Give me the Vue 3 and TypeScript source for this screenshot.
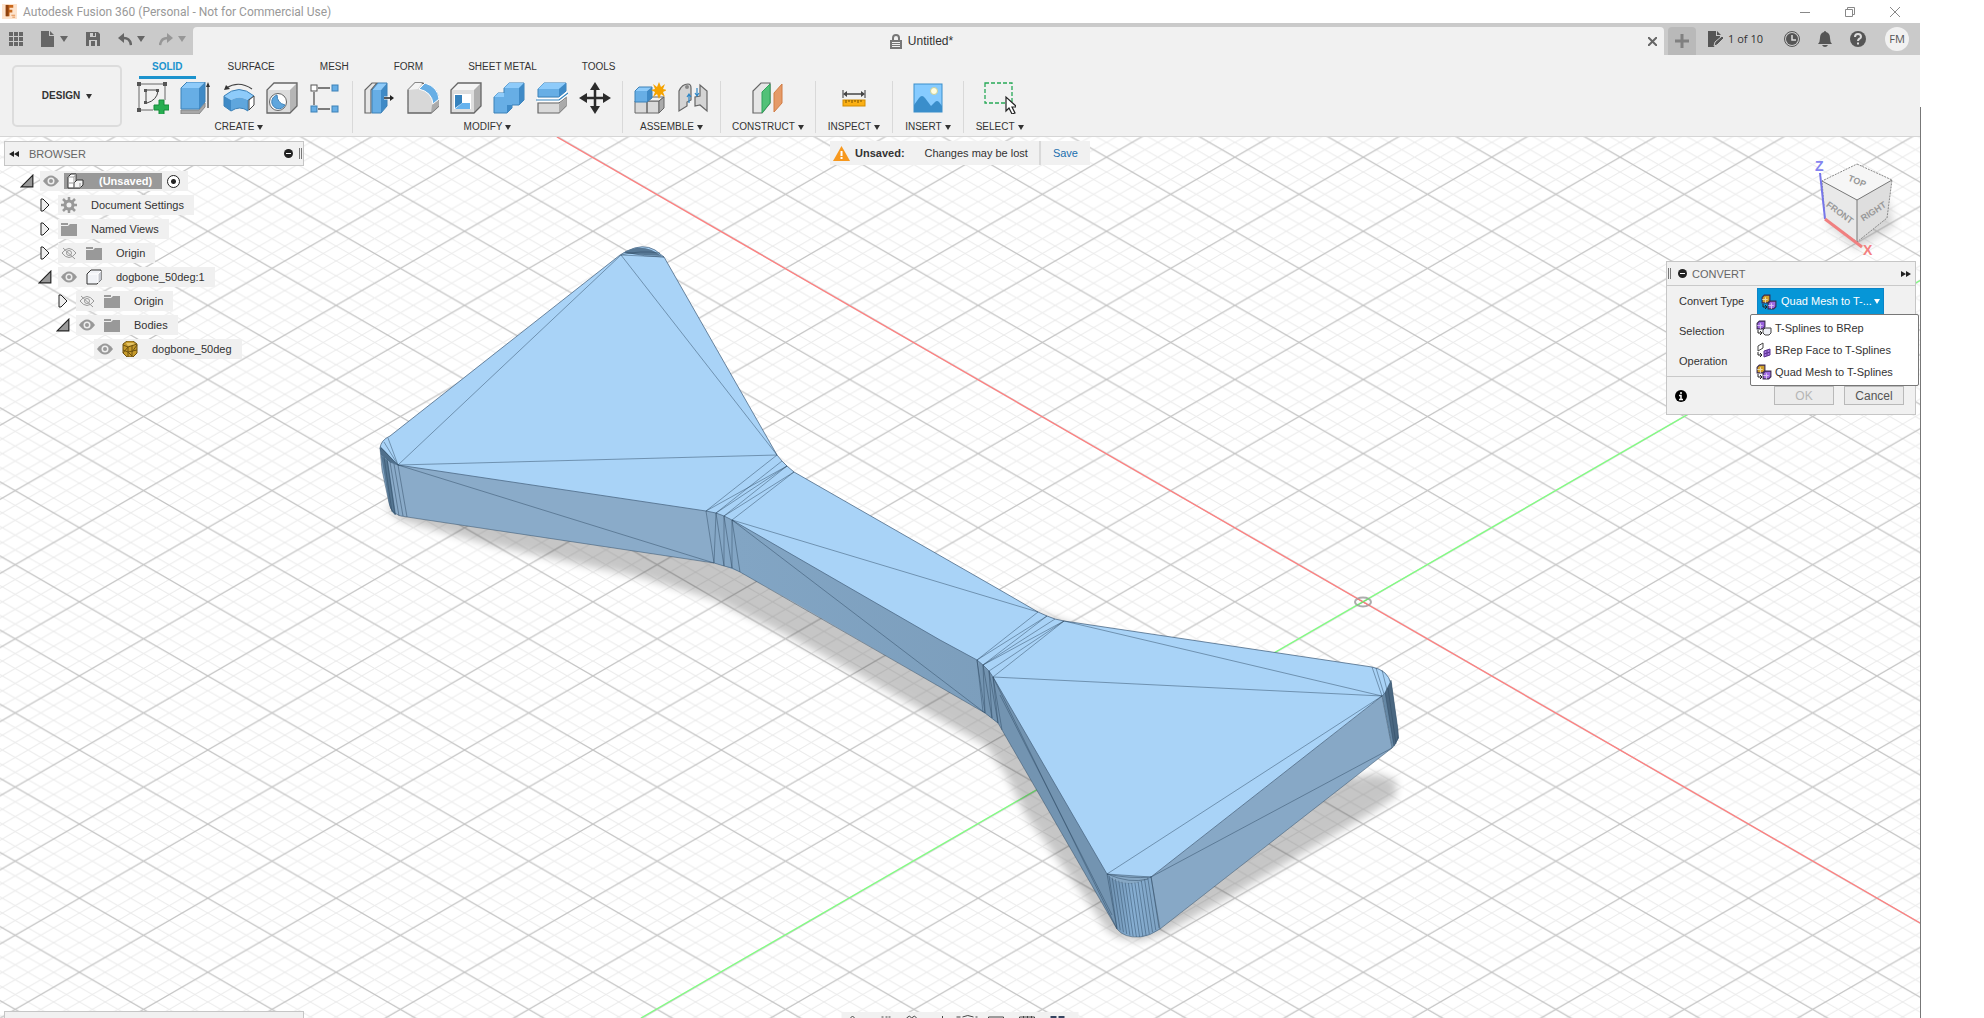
<script setup lang="ts">
import { ref } from 'vue'

interface ToolGroup {
  label: string
  icons: string[]
}

interface TreeRow {
  label: string
  level: number
  arrow: 'open' | 'closed' | 'none'
  icons: string[]
}

const tabs: string[] = ['SOLID', 'SURFACE', 'MESH', 'FORM', 'SHEET METAL', 'TOOLS']
const activeTab = ref('SOLID')

const groups: ToolGroup[] = [
  { label: 'CREATE', icons: ['sketch', 'extrude', 'revolve', 'hole', 'pattern'] },
  { label: 'MODIFY', icons: ['presspull', 'fillet', 'shell', 'combine', 'split', 'move'] },
  { label: 'ASSEMBLE', icons: ['component', 'joint'] },
  { label: 'CONSTRUCT', icons: ['plane'] },
  { label: 'INSPECT', icons: ['measure'] },
  { label: 'INSERT', icons: ['picture'] },
  { label: 'SELECT', icons: ['marquee'] },
]

const tree: TreeRow[] = [
  { label: 'Document Settings', level: 1, arrow: 'closed', icons: ['gear'] },
  { label: 'Named Views', level: 1, arrow: 'closed', icons: ['folder'] },
  { label: 'Origin', level: 1, arrow: 'closed', icons: ['eye-off', 'folder'] },
  { label: 'dogbone_50deg:1', level: 1, arrow: 'open', icons: ['eye', 'cube'] },
  { label: 'Origin', level: 2, arrow: 'closed', icons: ['eye-off', 'folder'] },
  { label: 'Bodies', level: 2, arrow: 'open', icons: ['eye', 'folder'] },
  { label: 'dogbone_50deg', level: 3, arrow: 'none', icons: ['eye', 'mesh'] },
]

const convertType = ref('quad')
const convertOptions = [
  { value: 'tspline', label: 'T-Splines to BRep', icon: 'conv-t' },
  { value: 'brep', label: 'BRep Face to T-Splines', icon: 'conv-b' },
  { value: 'quad', label: 'Quad Mesh to T-Splines', icon: 'conv-q' },
]

const minor = [1, 2, 3, 4]

/* Vertical facets of the rounded corner nearest to the viewer */
const frontFacets = Array.from({ length: 14 }, (_, i) => {
  const t = i / 13
  const arc = Math.sin(Math.PI * t)
  return {
    x1: 1109 + 42 * t,
    y1: 876 + 7 * arc,
    x2: 1117 + 42 * t,
    y2: 928 + 9 * arc,
  }
})
</script>

<template>
  <div class="page">
    <svg class="defs" width="0" height="0" aria-hidden="true">
      <symbol id="i-sketch" viewBox="0 0 32 32">
        <path d="M2 2h26v16M2 2v26h14" fill="none" stroke="#666" stroke-width="1" />
        <path d="M9 8h10M9 8v12M21 9q-1 9-11 12" fill="none" stroke="#444" />
        <path d="M0 0h4v4H0zM26 0h4v4h-4zM0 26h4v4H0zM7 7h3v3H7zM19 7h3v3h-3zM7 19h3v3H7z" fill="#555" />
        <path d="M22 18h5v5h5v5h-5v5h-5v-5h-5v-5h5z" fill="#27ae51" stroke="#168a3a" stroke-width="1" />
      </symbol>
      <symbol id="i-extrude" viewBox="0 0 32 32">
        <path d="M1 28h18l6-7v4l-6 7H1z" fill="#a8a8a8" stroke="#888" />
        <path d="M1 6h18v21H1z" fill="#67aee5" />
        <path d="M1 6l6-6h18l-6 6z" fill="#8ecbfa" />
        <path d="M19 6l6-6v20l-6 7z" fill="#3f8ac6" />
        <path d="M1 27V6l6-6h18v20l-6 7z" fill="none" stroke="#3d81b7" />
        <path d="M28 26V4" stroke="#333" stroke-width="1.2" />
        <path d="M26 5l2-5 2 5z" fill="#333" />
      </symbol>
      <symbol id="i-revolve" viewBox="0 0 32 32">
        <path d="M1 14Q16 1 31 14l-6 4q-9-5-17 0z" fill="#8ecbfa" />
        <path d="M1 14l7 4v11l-7-5z" fill="#3f8ac6" />
        <path d="M8 18q8-5 17 0v11q-8-6-17 0z" fill="#5fa6dd" />
        <path d="M1 14Q16 1 31 14l-6 4v11q-8-6-17 0l-7-5z" fill="none" stroke="#3d81b7" />
        <path d="M26 18l5-4v9l-5 5z" fill="#fff" stroke="#444" />
        <path d="M3 6Q16-2 29 7" fill="none" stroke="#444" stroke-width="1.2" />
        <path d="M1 8l2-5 4 4z" fill="#333" />
      </symbol>
      <symbol id="i-hole" viewBox="0 0 32 32">
        <path d="M1 8l7-7h23l-7 7z" fill="#f4f4f4" />
        <path d="M24 8l7-7v23l-7 7z" fill="#b5b5b5" />
        <path d="M1 8h23v23H1z" fill="#dcdcdc" />
        <path d="M1 31V8l7-7h23v23l-7 7z" fill="none" stroke="#666" stroke-width="1.3" />
        <circle cx="12" cy="20" r="8.500" fill="#fff" stroke="#666" />
        <path d="M11 13a7 7 0 1 0 8 10q-8-2-8-10z" fill="#5fa6dd" stroke="#3d81b7" />
      </symbol>
      <symbol id="i-pattern" viewBox="0 0 32 32">
        <path d="M9 6h12M5 10v13M9 27h12" stroke="#555" stroke-width="1.300" />
        <rect x="2" y="3" width="6" height="6" fill="#fff" stroke="#555" />
        <rect x="23" y="3" width="6" height="6" fill="#67aee5" stroke="#3d81b7" />
        <rect x="2" y="24" width="6" height="6" fill="#67aee5" stroke="#3d81b7" />
        <rect x="23" y="24" width="6" height="6" fill="#67aee5" stroke="#3d81b7" />
      </symbol>
      <symbol id="i-presspull" viewBox="0 0 32 32">
        <path d="M1 31V8l7-7h5l-6 7v23z" fill="#e6e6e6" stroke="#666" stroke-width="1.2" />
        <path d="M8 8l6-7h9l-6 7z" fill="#8ecbfa" />
        <path d="M8 8h9v23H8z" fill="#67aee5" />
        <path d="M17 8l6-7v23l-6 7z" fill="#3f8ac6" />
        <path d="M8 31V8l6-7h9v23l-6 7z" fill="none" stroke="#3d81b7" />
        <path d="M20 16h7" stroke="#fff" stroke-width="3" />
        <path d="M20 16h7" stroke="#222" stroke-width="1.5" />
        <path d="M26 13l4 3-4 3z" fill="#222" />
      </symbol>
      <symbol id="i-fillet" viewBox="0 0 32 32">
        <path d="M1 31V8l7-7h7q16 4 17 17v6l-8 7z" fill="#d8d8d8" stroke="#666" stroke-width="1.300" />
        <path d="M1 8l7-7h7l-4 6z" fill="#f4f4f4" />
        <path d="M12 7l6-6q13 4 14 16l-6 5Q25 10 12 7z" fill="#67aee5" stroke="#fff" stroke-width="1" />
        <path d="M25 23l7-5v6l-8 7z" fill="#aaa" />
      </symbol>
      <symbol id="i-shell" viewBox="0 0 32 32">
        <path d="M1 8l7-7h23l-7 7z" fill="#f4f4f4" />
        <path d="M24 8l7-7v23l-7 7z" fill="#b0b0b0" />
        <path d="M1 8h23v23H1z" fill="#dedede" />
        <path d="M1 31V8l7-7h23v23l-7 7z" fill="none" stroke="#666" stroke-width="1.300" />
        <path d="M4 12h17v15H4z" fill="#fff" />
        <path d="M5 13h7v8l-7 5z" fill="#3682bd" />
        <path d="M5 27l7-6h8v6z" fill="#67b3ee" />
      </symbol>
      <symbol id="i-combine" viewBox="0 0 32 32">
        <path d="M1 31V15l4-4h6V6l5-5h15v17l-5 5h-7v3l-5 5z" fill="#67aee5" stroke="#3d81b7" />
        <path d="M11 6l5-5h15l-5 5zM1 15l4-4h6v4z" fill="#8ecbfa" />
        <path d="M26 6l5-5v17l-5 5zM14 23h5v3l-5 5z" fill="#3f8ac6" />
      </symbol>
      <symbol id="i-split" viewBox="0 0 32 32">
        <path d="M2 21h21l7-6v9l-7 7H2z" fill="#dadada" stroke="#666" stroke-width="1.2" />
        <path d="M23 22l7-6v8l-7 7z" fill="#aaa" />
        <path d="M2 15V7l6-6h22v8l-7 6z" fill="#67aee5" stroke="#3d81b7" />
        <path d="M2 7l6-6h22l-7 6z" fill="#8ecbfa" />
        <path d="M23 7l7-6v8l-7 6z" fill="#3f8ac6" />
        <path d="M1 18h22l9-7" fill="none" stroke="#fff" stroke-width="4" />
        <path d="M0 18h23l9-7" fill="none" stroke="#3483bd" stroke-width="1.200" />
      </symbol>
      <symbol id="i-move" viewBox="0 0 32 32">
        <path d="M16 5v22M5 16h22" stroke="#2b2b2b" stroke-width="2.500" />
        <path d="M16 0l5 8H11zM16 32l5-8H11zM0 16l8-5v10zM32 16l-8-5v10z" fill="#2b2b2b" />
      </symbol>
      <symbol id="i-component" viewBox="0 0 32 32">
        <path d="M1 19h12v12H1zM13 19h12v12H13z" fill="#d9d9d9" stroke="#666" />
        <path d="M13 19l5-4h12l-5 4z" fill="#f2f2f2" stroke="#666" />
        <path d="M25 19l5-4v11l-5 5z" fill="#aaa" stroke="#666" />
        <path d="M1 9l4-4h13l-5 4z" fill="#8ecbfa" />
        <path d="M1 9h12v11H1z" fill="#67aee5" />
        <path d="M13 9l5-4v11l-5 4z" fill="#3f8ac6" />
        <path d="M1 20V9l4-4h13v11l-5 4z" fill="none" stroke="#3d81b7" />
        <path d="M25 0l2 5 4-3-2 5 4 1-4 2 2 5-4-3-2 5-2-5-4 3 2-5-4-2 4-1-2-5 4 3z" fill="#f5a300" />
      </symbol>
      <symbol id="i-joint" viewBox="0 0 32 32">
        <path d="M2 29V9Q5 2 11 2q3 0 3 4v12l-4 2v4z" fill="#d4d4d4" stroke="#666" stroke-width="1.200" />
        <path d="M30 29V9l-7-6v11l-5 1v9l5-1z" fill="#d4d4d4" stroke="#666" stroke-width="1.200" />
        <circle cx="10" cy="5" r="2" fill="#888" />
        <path d="M12 21v-8M20 6v8M18 11l2 3 2-3M10 15l2-3 2 3" fill="none" stroke="#2d86c6" stroke-width="1.200" />
      </symbol>
      <symbol id="i-plane" viewBox="0 0 32 32">
        <path d="M1 31V9l8-8h9v20l-8 10z" fill="#e6e6e6" stroke="#666" stroke-width="1.200" />
        <path d="M10 10l8-8v19l-8 10z" fill="#52c178" stroke="#2fa45a" />
        <path d="M22 11l8-9v19l-8 9z" fill="#e59a67" stroke="#d27d44" />
      </symbol>
      <symbol id="i-measure" viewBox="0 0 32 32">
        <path d="M5 8v8M27 8v8" stroke="#555" stroke-width="1.200" />
        <path d="M7 12h18" stroke="#444" stroke-width="1.500" />
        <path d="M5 12l4-3v6zM27 12l-4-3v6z" fill="#444" />
        <rect x="5" y="18" width="22" height="6" fill="#fbb014" stroke="#d48d00" />
        <path d="M8 18v3M11 18v2M14 18v3M17 18v2M20 18v3M23 18v2" stroke="#7a5200" />
      </symbol>
      <symbol id="i-picture" viewBox="0 0 32 32">
        <rect x="2" y="2" width="28" height="28" fill="#86cbff" stroke="#3b8fcc" />
        <path d="M2 23l5-7q3-4 6 0l6 8 4-4q2-2 4 0l3 4v6H2z" fill="#3a8ecb" />
        <circle cx="22" cy="9" r="3.500" fill="#fffde0" stroke="#c8cf9a" />
      </symbol>
      <symbol id="i-marquee" viewBox="0 0 32 32">
        <rect x="1" y="1" width="27" height="20" fill="none" stroke="#27a957" stroke-width="1.300" stroke-dasharray="4 2" />
        <path d="M22 15v14l3-3 3 6 3-1-3-6h5z" fill="#fff" stroke="#222" stroke-width="1.200" />
      </symbol>

      <symbol id="i-eye" viewBox="0 0 16 16">
        <path d="M0 8q8-11 16 0-8 11-16 0z" fill="#999" />
        <circle cx="8" cy="8" r="3.500" fill="#eee" />
        <circle cx="8" cy="8" r="2" fill="#999" />
      </symbol>
      <symbol id="i-eye-off" viewBox="0 0 16 16">
        <path d="M1 8q7-9 14 0-7 9-14 0z" fill="none" stroke="#999" />
        <circle cx="8" cy="8" r="2.500" fill="none" stroke="#999" />
        <path d="M2 3l12 11" stroke="#999" />
      </symbol>
      <symbol id="i-folder" viewBox="0 0 16 16">
        <path d="M0 5h7l2-2h7v12H0z" fill="#999" />
        <path d="M0 3h7" stroke="#999" stroke-width="2" />
      </symbol>
      <symbol id="i-gear" viewBox="0 0 16 16">
        <circle cx="8" cy="8" r="4" fill="none" stroke="#999" stroke-width="3" />
        <path d="M8 0v3M8 13v3M0 8h3M13 8h3M2 2l3 3M11 11l3 3M14 2l-3 3M5 11l-3 3" stroke="#999" stroke-width="2.500" />
      </symbol>
      <symbol id="i-cube" viewBox="0 0 16 16">
        <path d="M1 5l4-4h10v10l-4 4H1z" fill="#f0f2f6" stroke="#333" />
        <path d="M12 5l3-3v9l-3 3z" fill="#c4c7ce" />
        <path d="M2 5h10v9M12 5l3-3" stroke="#fff" fill="none" />
      </symbol>
      <symbol id="i-mesh" viewBox="0 0 16 16">
        <path d="M1 3l4-3h6l4 3v9l-4 4H5l-4-4z" fill="#c79b2b" stroke="#6f5310" />
        <path d="M1 4l5 2 9-3M6 6v10M10 5v11M1 9l5 2 9-2M1 12l5-6M10 11l5-7M6 11l4 4" fill="none" stroke="#6f5310" />
        <path d="M4 2h7l2 1-7 2z" fill="#e3c367" />
      </symbol>
      <symbol id="i-assembly" viewBox="0 0 18 16">
        <path d="M1 4l3-3h5v7L7 15H1z" fill="#fff" stroke="#333" />
        <path d="M7 10l3-3h6v5l-3 3H7z" fill="#f4f4f4" stroke="#333" />
        <path d="M1 10h6M7 4v11M13 10v5M1 4h6l2-3" fill="none" stroke="#999" />
      </symbol>

      <symbol id="i-box" viewBox="0 0 9 9">
        <path d="M1 3l2-2h5v5L6 8H1z" fill="currentColor" stroke="#3a2a50" stroke-width="1" />
        <path d="M1 5h5M4 3v5" stroke="#fff" stroke-opacity="0.600" fill="none" />
      </symbol>
      <symbol id="i-conv-t" viewBox="0 0 16 16">
        <use href="#i-box" x="0" y="0" width="10" height="10" color="#9a63dd" />
        <path d="M2 10v3h3M4 11l2 2-2 2" fill="none" stroke="#222" />
        <path d="M7 10l2-2h6v5l-2 2H9l-2-2z" fill="#eef0f7" stroke="#444" />
      </symbol>
      <symbol id="i-conv-b" viewBox="0 0 16 16">
        <path d="M2 4l5-3v5L2 9z" fill="#fff" stroke="#444" />
        <path d="M2 10v3h4M4 11l2 2-2 2" fill="none" stroke="#222" />
        <path d="M8 9l6-2v6l-6 2z" fill="#a273dc" stroke="#5b3191" />
        <path d="M8 12l6-2M11 8v6" stroke="#5b3191" />
      </symbol>
      <symbol id="i-conv-q" viewBox="0 0 16 16">
        <use href="#i-box" x="0" y="0" width="10" height="10" color="#d0a02a" />
        <path d="M2 10v3h3M4 11l2 2-2 2" fill="none" stroke="#222" />
        <use href="#i-box" x="6" y="6" width="10" height="10" color="#a06ae2" />
      </symbol>
    </svg>

    <div class="window">
      <header class="titlebar">
        <svg class="logo" viewBox="0 0 16 16" aria-hidden="true">
          <rect width="16" height="16" fill="#fde3cc" />
          <path d="M4 1h8v3H8v2h3v3H8v4H4z" fill="#c9681c" />
          <path d="M4 1h3v12H4z" fill="#8f4310" />
          <path d="M10 12h4M11 14h3" stroke="#e08a45" />
        </svg>
        <span class="app-name">Autodesk Fusion 360 (Personal - Not for Commercial Use)</span>
        <div class="win-buttons">
          <button aria-label="Minimize"><svg viewBox="0 0 10 10"><path d="M0 5.500h10" /></svg></button>
          <button aria-label="Restore"><svg viewBox="0 0 10 10"><path d="M.5 2.500h7v7h-7zM2.500 2.500v-2h7v7h-2" /></svg></button>
          <button aria-label="Close"><svg viewBox="0 0 10 10"><path d="M0 0l10 10M10 0L0 10" /></svg></button>
        </div>
      </header>

      <div class="docbar">
        <nav class="quick" aria-label="Quick access">
          <button aria-label="Data panel">
            <svg width="14" height="14" viewBox="0 0 14 14"><path d="M0 0h4v4H0zM5 0h4v4H5zM10 0h4v4h-4zM0 5h4v4H0zM5 5h4v4H5zM10 5h4v4h-4zM0 10h4v4H0zM5 10h4v4H5zM10 10h4v4h-4z" fill="#666" /></svg>
          </button>
          <button aria-label="File">
            <svg width="14" height="16" viewBox="0 0 14 16"><path d="M0 0h8v5h5v11H0zM9 0l4 4H9z" fill="#666" /></svg>
            <i class="caret"></i>
          </button>
          <button aria-label="Save">
            <svg width="14" height="14" viewBox="0 0 14 14"><path d="M0 0h12l2 2v12H0z" fill="#666" /><path d="M4 1h6v4H4zM3 8h8v6H3z" fill="#ccc" /><path d="M5 9h4v5H5zM7 1h2v3H7z" fill="#666" /></svg>
          </button>
          <button aria-label="Undo">
            <svg width="14" height="14" viewBox="0 0 14 14"><path d="M0 6l6-5v10z" fill="#666" /><path d="M4 6q8-1 9 7" fill="none" stroke="#666" stroke-width="2.500" /></svg>
            <i class="caret"></i>
          </button>
          <button aria-label="Redo" class="dim">
            <svg width="14" height="14" viewBox="0 0 14 14"><path d="M14 6L8 1v10z" fill="#666" /><path d="M10 6Q2 5 1 13" fill="none" stroke="#666" stroke-width="2.500" /></svg>
            <i class="caret"></i>
          </button>
        </nav>
        <div class="doc-tab">
          <svg width="12" height="15" viewBox="0 0 12 15"><path d="M3 6V4q0-3 3-3t3 3v2" fill="none" stroke="#777" stroke-width="2" /><path d="M0 6h12v9H0z" fill="#777" /><path d="M2 8.500h8M2 10.500h8M2 12.500h8" stroke="#f1f1f1" /></svg>
          <span>Untitled*</span>
          <button class="tab-close" aria-label="Close document"><svg width="9" height="9" viewBox="0 0 9 9"><path d="M0 0l9 9M9 0L0 9" stroke="#666" stroke-width="2" /></svg></button>
        </div>
        <button class="new-tab" aria-label="New document"><svg width="14" height="14" viewBox="0 0 14 14"><path d="M7 0v14M0 7h14" stroke="#808080" stroke-width="3" /></svg></button>
        <div class="account">
          <button class="jobs">
            <svg width="16" height="16" viewBox="0 0 16 16"><path d="M0 0h8v5h4v3l-6 8H0zM9 0l4 4H9z" fill="#555" /><path d="M6 15l1-4 7-6 2 2-7 7z" fill="#555" stroke="#ccc" /></svg>
            <span>1 of 10</span>
          </button>
          <button aria-label="Job status"><svg width="16" height="16" viewBox="0 0 16 16"><circle cx="8" cy="8" r="7.500" fill="none" stroke="#555" /><circle cx="8" cy="8" r="6" fill="#555" /><path d="M8 4v5h4" fill="none" stroke="#ddd" stroke-width="1.500" /></svg></button>
          <button aria-label="Notifications"><svg width="16" height="16" viewBox="0 0 16 16"><path d="M8 0q1 0 1 1 4 1 4 6 0 4 2 6H1q2-2 2-6 0-5 4-6 0-1 1-1zM5 14h6q-1 2-3 2t-3-2z" fill="#555" /></svg></button>
          <button aria-label="Help"><svg width="16" height="16" viewBox="0 0 16 16"><circle cx="8" cy="8" r="8" fill="#555" /><path d="M5 6q0-3 3-3t3 3q0 1-2 2-1 1-1 2M8 11.500v2" fill="none" stroke="#ddd" stroke-width="2" /></svg></button>
          <button class="avatar">FM</button>
        </div>
      </div>

      <div class="ribbon">
        <button class="workspace">DESIGN <i class="caret"></i></button>
        <div class="ribbon-body">
          <div class="tabs" role="tablist">
            <button
              v-for="tab in tabs"
              :key="tab"
              role="tab"
              :aria-selected="tab === activeTab"
              :class="{ active: tab === activeTab }"
              @click="activeTab = tab"
            >{{ tab }}</button>
          </div>
          <div class="groups">
            <section v-for="group in groups" :key="group.label" class="group">
              <div class="tools">
                <button v-for="icon in group.icons" :key="icon" :aria-label="icon">
                  <svg width="32" height="32"><use :href="'#i-' + icon" /></svg>
                </button>
              </div>
              <button class="group-label">{{ group.label }}<i class="caret"></i></button>
            </section>
          </div>
        </div>
      </div>

      <main class="stage">
        <svg class="scene" viewBox="0 137 1920 881" preserveAspectRatio="xMidYMid slice" aria-hidden="true">
          <defs>
            <pattern id="grid" width="128.390" height="74.100" patternUnits="userSpaceOnUse" x="1363.300" y="601.800">
              <g stroke="#ebebeb" stroke-width="1">
                <template v-for="n in minor" :key="n">
                  <path :d="`M${n * 25.678} 0L128.39 ${74.1 - n * 14.82}M0 ${74.1 - n * 14.82}L${n * 25.678} 74.1`" />
                  <path :d="`M${n * 25.678} 0L0 ${n * 14.82}M128.39 ${n * 14.82}L${n * 25.678} 74.1`" />
                </template>
              </g>
              <path d="M0 0L128.390 74.100M128.390 0L0 74.100" stroke="#c4c4c4" stroke-width="1.200" />
            </pattern>
            <filter id="soft" x="-10%" y="-10%" width="120%" height="120%"><feGaussianBlur stdDeviation="4" /></filter>
            <filter id="cubeshade" x="-50%" y="-50%" width="200%" height="200%"><feGaussianBlur stdDeviation="5" /></filter>
            <linearGradient id="neck" x1="690" y1="0" x2="1000" y2="0" gradientUnits="userSpaceOnUse">
              <stop offset="0" stop-color="#8aabc9" />
              <stop offset="0.150" stop-color="#82a5c4" />
              <stop offset="1" stop-color="#7c9ebc" />
            </linearGradient>
            <linearGradient id="cap" x1="0" x2="1"><stop offset="0" stop-color="#6d90af" /><stop offset="0.500" stop-color="#86aed2" /><stop offset="1" stop-color="#7fa3c3" /></linearGradient>
          </defs>
          <rect y="137" width="1920" height="881" fill="#fff" />
          <rect y="137" width="1920" height="881" fill="url(#grid)" />
          <path d="M557 137L1920 923" stroke="#ff7f7f" stroke-width="1.300" />
          <path d="M1920 280.500L641 1018" stroke="#80ff80" stroke-width="1.300" />
          <ellipse cx="1363" cy="602" rx="8" ry="4.500" fill="none" stroke="#999" stroke-opacity="0.800" stroke-width="2" />
          <path d="M1357 598.500L1369 605.500" stroke="#f47f7f" />
          <path d="M1357 605.500L1369 598.500" stroke="#70e070" />

          <path
            class="shadow"
            d="M385 505L400 520 490 545 643 578 715 600 790 637 940 720 985 745 1005 773 1027 817 1087 900 1107 930 1120 938 1140 941 1165 933 1233 895 1307 851 1373 812 1396 796 1396 780 1377 774 1353 777 1300 700 700 500z"
            filter="url(#soft)"
          />
          <path d="M380 448L382 470 389 503Q391 516 407 517L714 563 724 566 732 568 740 572 790 600 820 560 706 500z" fill="#8aabc9" />
          <path d="M706 505L714 563 724 566 740 572 790 600 940 687 985 713 1000 725 993 660 940 630 820 550 732 500z" fill="url(#neck)" />
          <path d="M977 650L985 713 998 723 1002 730 1117 929 1117 874 993 660z" fill="#7394b1" />
          <path d="M1107 874L1117 929Q1124 938 1140 937 1150 936 1160 929L1151 875z" fill="url(#cap)" />
          <path d="M1151 877L1160 929 1392 748 1382 696z" fill="#87a8c6" />
          <path d="M1382 696L1392 748Q1399 742 1398 730L1391 680z" fill="#6688a5" />
          <path
            class="top-face"
            d="M380 448Q381 440 390 436L620 255 627 251Q643 243 655 250L664 257 777 455 782 461 787 466 794 472 1000 590 1038 612 1047 616 1055 619 1064 621 1372 667Q1388 670 1391 684 1389 691 1382 696L1151 877Q1130 888 1112 879L1107 874 993 677 989 671 983 665 977 660 940 640 732 520 724 516 716 513 706 511 398 465 390 462 382 454z"
          />
          <path d="M623 253Q642 241 662 256 640 255 623 253z" fill="#577895" />
          <path d="M380 446L385 451 398 465 390 462 381 455z" fill="#4f6f8b" />
          <path d="M381 455L389 503Q391 513 396 515L388 461z" fill="#567793" />
          <path d="M1391 680L1399 738 1394 746 1385 692z" fill="#4a6781" />
          <path d="M1107 874L1151 877Q1130 889 1112 879z" fill="#86a8c5" />
          <g class="edges">
            <path d="M380 448L382 470 389 503Q391 516 407 517L714 563 724 566 732 568 740 572 940 687 985 713 998 723 1002 730 1117 929Q1124 938 1140 937 1150 936 1160 929L1392 748Q1399 742 1398 730L1391 680" />
            <path d="M621 255L398 465M621 255L777 455M398 465L777 455M398 465L714 563M664 257L621 255" />
            <path d="M706 511L777 455M706 511L787 466M716 513L782 461M716 513L787 466M724 516L787 466M724 516L794 472M732 520L794 472" />
            <path d="M706 511L714 563M716 513L714 563M716 513L724 566M724 516L724 566M724 516L732 568M732 520L732 568M732 520L740 572" />
            <path d="M732 520L1038 612M732 520L985 713" />
            <path d="M977 660L1038 612M977 660L1047 616M983 665L1047 616M983 665L1055 619M983 665L1064 621M989 671L1064 621M993 677L1064 621" />
            <path d="M977 660L985 713M977 660L983 712M983 665L985 713M983 665L992 718M989 671L992 718M989 671L998 723M993 677L998 723M993 677L1002 730" />
            <path d="M993 677L1382 696M1064 621L1382 696M1107 874L1382 696M1392 748L1151 877M993 677L1117 929M1000 695L1112 915" />
            <path d="M1107 874L1117 929M1107 874L1151 877M1151 877L1160 929M1382 696L1392 748M1385 692L1394 746M1388 688L1396 744" />
            <path d="M1372 667L1382 696M1376 668L1384 694M1382 670L1387 690M388 438L398 465M384 442L398 465M381 448L398 465" />
            <path d="M398 465L407 517M394 464L403 516M390 462L399 516M387 459L395 515M384 457L392 512" />
            <path d="M1107 874Q1130 879 1151 877M1107 874Q1130 884 1148 879M625 252Q645 257 664 257M621 255Q640 250 660 253" />
            <line v-for="(f, i) in frontFacets" :key="i" :x1="f.x1" :y1="f.y1" :x2="f.x2" :y2="f.y2" />
          </g>

          <path d="M1825 222L1857 250 1894 226 1888 200 1860 190z" fill="#777" opacity="0.300" filter="url(#cubeshade)" />
          <path d="M1857 164L1892 180 1857 200 1822 181z" fill="#f6f6f6" />
          <path d="M1822 181L1857 200V242L1825 219z" fill="#e9e9e9" />
          <path d="M1892 180L1857 200V242L1887 218z" fill="#dedede" />
          <path d="M1857 164L1892 180 1887 218 1857 242 1825 219 1822 181z" fill="none" stroke="#888" stroke-dasharray="2 1" />
          <path d="M1822 181L1857 200 1892 180M1857 200V242" fill="none" stroke="#777" />
          <path d="M1820 173L1825 219" stroke="#7676ea" stroke-width="2" />
          <path d="M1825 219L1862 247" stroke="#f08080" stroke-width="3" />
          <text class="axis" x="1815" y="171" fill="#8484f0">Z</text>
          <text class="axis" x="1863" y="255" fill="#f48080">X</text>
          <text class="face" transform="translate(1856 184) rotate(22)">TOP</text>
          <text class="face" transform="translate(1838 215) rotate(36)">FRONT</text>
          <text class="face" transform="translate(1875 214) rotate(-33)">RIGHT</text>
        </svg>

        <aside class="browser">
          <div class="browser-head">
            <svg width="12" height="8" viewBox="0 0 12 8"><path d="M5 1v6L0 4zM10 1v6L5 4z" fill="#222" /></svg>
            <span>BROWSER</span>
            <svg class="push" width="9" height="9" viewBox="0 0 9 9"><circle cx="4.500" cy="4.500" r="4.500" fill="#222" /><path d="M2 4.500h5" stroke="#fff" /></svg>
            <i class="grip"></i>
          </div>
          <ul class="tree">
            <li class="row">
              <svg class="arrow" viewBox="0 0 12 12"><path d="M1 11L11 1v10z" fill="#999" stroke="#222" /></svg>
              <div class="chip root">
                <svg width="16" height="16"><use href="#i-eye" /></svg>
                <span class="root-name"><svg width="18" height="16"><use href="#i-assembly" /></svg>(Unsaved)</span>
                <input type="radio" name="active-component" aria-label="Activate component" checked />
              </div>
            </li>
            <li v-for="(row, i) in tree" :key="i" class="row" :class="'level-' + row.level">
              <svg v-if="row.arrow === 'open'" class="arrow" viewBox="0 0 12 12"><path d="M1 11L11 1v10z" fill="#999" stroke="#222" /></svg>
              <svg v-else-if="row.arrow === 'closed'" class="arrow" viewBox="0 0 12 14"><path d="M2 1v12h2l6-6-6-6z" fill="#eee" stroke="#222" /></svg>
              <span v-else class="arrow"></span>
              <div class="chip">
                <svg v-for="icon in row.icons" :key="icon" width="16" height="16"><use :href="'#i-' + icon" /></svg>
                <span class="name">{{ row.label }}</span>
              </div>
            </li>
          </ul>
        </aside>

        <div class="unsaved" role="status">
          <svg width="17" height="15" viewBox="0 0 17 15"><path d="M8.500 0L17 15H0z" fill="#f7981d" /><path d="M8.500 5v5M8.500 11v2" stroke="#fff" stroke-width="2" /></svg>
          <strong>Unsaved:</strong>
          <span class="unsaved-text">Changes may be lost</span>
          <a href="#save">Save</a>
        </div>

        <form class="convert" @submit.prevent>
          <div class="convert-head">
            <i class="grip"></i>
            <svg width="9" height="9" viewBox="0 0 9 9"><circle cx="4.500" cy="4.500" r="4.500" fill="#222" /><path d="M2 4.500h5" stroke="#fff" /></svg>
            <span>CONVERT</span>
            <svg class="push" width="12" height="8" viewBox="0 0 12 8"><path d="M1 1v6l5-3zM6 1v6l5-3z" fill="#222" /></svg>
          </div>
          <div class="field">
            <label for="convert-type">Convert Type</label>
            <div class="picker">
              <svg class="picker-icon" width="16" height="16"><use href="#i-conv-q" /></svg>
              <select id="convert-type" v-model="convertType">
                <option value="quad">Quad Mesh to T-...</option>
                <option value="brep">BRep Face to T-...</option>
                <option value="tspline">T-Splines to BRep</option>
              </select>
              <i class="caret picker-caret"></i>
              <ul class="menu">
                <li v-for="option in convertOptions" :key="option.value">
                  <button type="button" @click="convertType = option.value">
                    <svg width="16" height="16"><use :href="'#i-' + option.icon" /></svg>{{ option.label }}
                  </button>
                </li>
              </ul>
            </div>
          </div>
          <div class="field"><span>Selection</span></div>
          <div class="field"><span>Operation</span></div>
          <div class="convert-foot">
            <svg width="12" height="12" viewBox="0 0 12 12"><circle cx="6" cy="6" r="6" fill="#000" /><path d="M6 2v2M4 5.500h2V9M4 9.500h4" fill="none" stroke="#fff" stroke-width="1.500" /></svg>
            <button type="submit" disabled>OK</button>
            <button type="button">Cancel</button>
          </div>
        </form>

        <div class="comments"></div>
        <nav class="navbar" aria-label="View navigation">
          <svg width="237" height="6" viewBox="0 0 237 6" aria-hidden="true">
            <path d="M9 6l2-2 2 2M40 5h2M44 5h2M47 5h2M65 6l3-2 2 2 3-2 2 2M101 4v2M115 5h4M121 5q5-3 11 0M134 5h2M147 6V5h15v1M178 6V5h15v1M182 4v2M186 4v2M190 4v2" fill="none" stroke="#444" />
            <path d="M209 4h6v2h-6zM217 4h6v2h-6z" fill="#34435f" />
          </svg>
        </nav>
      </main>
    </div>
  </div>
</template>

<style>
body {
  margin: 0;
  background: #fff;
}
</style>

<style scoped>
.page {
  min-height: 100vh;
  display: flex;
  padding-right: 64px;
  box-sizing: border-box;
  overflow: hidden;
  background: #fff;
  color: #333;
  font: 11px/16px "Liberation Sans", Arial, sans-serif;
}

.defs {
  position: absolute;
}

button {
  margin: 0;
  padding: 0;
  border: 0;
  background: none;
  font: inherit;
  color: inherit;
  cursor: pointer;
}

svg {
  display: block;
  flex: none;
}

ul {
  margin: 0;
  padding: 0;
  list-style: none;
}

.caret {
  flex: none;
  width: 0;
  height: 0;
  border: 3px solid transparent;
  border-top: 5px solid #333;
  border-bottom: 0;
}

.grip {
  width: 1px;
  height: 11px;
  border: solid #777;
  border-width: 0 1px;
}

.push {
  margin-left: auto;
}

.window {
  position: relative;
  flex: 1;
  min-width: 0;
  display: flex;
  flex-direction: column;
}

.window::after {
  content: "";
  position: absolute;
  top: 107px;
  right: -1px;
  bottom: 0;
  width: 1px;
  background: #777;
}

/* Title bar */
.titlebar {
  display: flex;
  align-items: center;
  gap: 6px;
  height: 23px;
  padding-left: 2px;
}

.logo {
  width: 15px;
  height: 15px;
}

.app-name {
  font: 12px/16px Roboto, "Open Sans", sans-serif;
  color: #999;
}

.win-buttons {
  display: flex;
  gap: 35px;
  margin-left: auto;
  padding-right: 20px;
}

.win-buttons svg {
  width: 10px;
  height: 10px;
  fill: none;
  stroke: #888;
}

/* Document bar */
.docbar {
  display: flex;
  height: 28px;
  padding-top: 4px;
  background: #cacaca;
}

.quick {
  flex: none;
  display: flex;
  align-items: center;
  gap: 18px;
  width: 184px;
  padding: 0 0 4px 9px;
}

.quick button {
  display: flex;
  align-items: center;
  gap: 5px;
}

.quick .caret {
  border-width: 6px 4px 0;
  border-top-color: #666;
}

.quick .dim {
  opacity: 0.5;
  margin-left: -4px;
}

.doc-tab {
  position: relative;
  flex: 1;
  display: flex;
  align-items: center;
  justify-content: center;
  gap: 6px;
  padding-right: 14px;
  background: #f1f1f1;
  border-radius: 4px 4px 0 0;
  font-size: 12px;
}

.tab-close {
  position: absolute;
  right: 7px;
}

.new-tab {
  display: flex;
  align-items: center;
  justify-content: center;
  width: 28px;
  margin-left: 4px;
  background: #b9b9b9;
  border-radius: 4px 4px 0 0;
}

.account {
  display: flex;
  align-items: center;
  gap: 17px;
  padding: 0 11px 4px 12px;
  font: 11px/16px "Open Sans", "Noto Sans", sans-serif;
}

.jobs {
  display: flex;
  align-items: center;
  gap: 4px;
  margin-right: 4px;
}

.account .avatar {
  width: 24px;
  height: 24px;
  margin-left: 2px;
  border-radius: 50%;
  background: #f1f1f1;
  color: #555;
}

/* Ribbon */
.ribbon {
  display: flex;
  height: 81px;
  background: #f1f1f1;
  border-bottom: 1px solid #d6d6d6;
  font-size: 10px;
}

.workspace {
  display: flex;
  align-items: center;
  justify-content: center;
  gap: 6px;
  width: 110px;
  height: 62px;
  box-sizing: border-box;
  margin: 10px 0 0 12px;
  border: 2px solid #dcdcdc;
  border-radius: 5px;
  font-weight: bold;
}

.ribbon-body {
  padding-left: 4px;
}

.tabs {
  display: flex;
  gap: 19px;
  height: 24px;
  padding-left: 13px;
}

.tabs button {
  padding: 2px 13px 0;
  border-bottom: 3px solid transparent;
}

.tabs .active {
  border-bottom-color: #1c93cd;
  color: #1c93cd;
  font-weight: bold;
}

.groups {
  display: flex;
  padding-top: 2px;
}

.group {
  display: flex;
  flex-direction: column;
  align-items: center;
  height: 52px;
  padding: 0 11px;
  border-right: 1px solid #d9d9d9;
}

.group:nth-child(n + 5) {
  padding: 0 12px;
}

.group:last-child {
  border-right: 0;
}

.tools {
  display: flex;
  gap: 11px;
  padding-top: 1px;
}

.group-label {
  display: flex;
  align-items: center;
  gap: 3px;
  height: 16px;
  margin-top: 5px;
}

/* Canvas */
.stage {
  position: relative;
  flex: 1;
  display: flex;
  align-items: flex-start;
  overflow: hidden;
}

.scene {
  position: absolute;
  inset: 0;
  width: 100%;
  height: 100%;
}

.shadow {
  fill: #000;
  opacity: 0.22;
}

.top-face {
  fill: #a9d3f7;
  stroke: #4c6a86;
  stroke-width: 0.8;
}

.edges {
  fill: none;
  stroke: #2e4a63;
  stroke-opacity: 0.6;
  stroke-width: 0.8;
}

.axis {
  font: bold 14px "Liberation Sans", Arial, sans-serif;
}

.face {
  font: bold 9px "Liberation Sans", Arial, sans-serif;
  fill: #999;
  text-anchor: middle;
}

/* Browser */
.browser {
  position: relative;
  width: 300px;
  margin: 4px 0 0 4px;
}

.browser-head {
  display: flex;
  align-items: center;
  gap: 8px;
  height: 23px;
  padding: 0 1px 0 4px;
  border: 1px solid #c6c6c6;
  background: #f1f1f1;
  color: #666;
}

.browser-head .grip {
  margin-left: -2px;
}

.tree {
  padding: 3px 0 0 14px;
}

.row {
  display: flex;
  align-items: center;
  height: 24px;
}

.level-1 {
  padding-left: 18px;
}

.level-2 {
  padding-left: 36px;
}

.level-3 {
  padding-left: 54px;
}

.arrow {
  width: 14px;
  height: 14px;
  margin: 0 6px 0 2px;
}

.chip {
  display: flex;
  align-items: center;
  gap: 9px;
  height: 20px;
  padding: 0 10px 0 3px;
  background: #f0f0f0;
}

.name {
  padding-left: 5px;
}

.chip.root {
  gap: 5px;
  padding-right: 8px;
}

.root-name {
  display: flex;
  align-items: center;
  gap: 14px;
  padding: 0 10px 0 3px;
  background: #999;
  color: #fff;
  font-weight: bold;
}

.root input {
  appearance: none;
  width: 13px;
  height: 13px;
  margin: 0;
  border: 1px solid #222;
  border-radius: 50%;
  background: radial-gradient(circle, #222 0 2px, #fff 3px);
}

/* Unsaved notice */
.unsaved {
  position: absolute;
  top: 4px;
  left: 50%;
  transform: translateX(-50%);
  display: flex;
  align-items: center;
  height: 24px;
  padding-left: 3px;
  background: #f1f1f1;
  white-space: nowrap;
}

.unsaved strong {
  margin: 0 20px 0 5px;
}

.unsaved a {
  padding: 4px 12px;
  margin-left: 11px;
  border-left: 2px solid #d9d9d9;
  color: #1a6fae;
  text-decoration: none;
}

/* Convert dialog */
.convert {
  position: relative;
  width: 248px;
  margin: 124px 4px 0 auto;
  border: 1px solid #c6c6c6;
  background: #f1f1f1;
}

.convert-head {
  display: flex;
  align-items: center;
  gap: 5px;
  height: 23px;
  padding: 0 3px 0 1px;
  border-bottom: 1px solid #c9c9c9;
  color: #666;
}

.convert-head .grip {
  margin-right: 2px;
}

.field {
  display: flex;
  align-items: center;
  height: 30px;
  padding-left: 12px;
}

.field label {
  width: 78px;
}

.picker {
  position: relative;
  width: 127px;
}

.picker select {
  display: block;
  appearance: none;
  width: 100%;
  height: 27px;
  padding: 0 4px 0 23px;
  border: 1px solid #0a84c8;
  border-radius: 0;
  background: #0696d7;
  color: #fff;
  font: inherit;
}

.picker-icon {
  position: absolute;
  top: 6px;
  left: 4px;
}

.picker-caret {
  position: absolute;
  top: 11px;
  right: 4px;
  border-top-color: #fff;
}

.menu {
  position: absolute;
  z-index: 1;
  top: 26px;
  left: -7px;
  width: 167px;
  padding: 2px 0;
  border: 1px solid #777;
  border-radius: 2px;
  background: #fff;
}

.menu button {
  display: flex;
  align-items: center;
  gap: 3px;
  width: 100%;
  height: 22px;
  padding-left: 5px;
  white-space: nowrap;
}

.convert-foot {
  display: flex;
  align-items: center;
  gap: 10px;
  height: 37px;
  padding: 0 11px 0 8px;
  border-top: 1px solid #c9c9c9;
}

.convert-foot svg {
  margin-right: auto;
}

.convert-foot button {
  width: 60px;
  height: 19px;
  border: 1px solid #b9b9b9;
  background: #ebebeb;
  color: #555;
  font-size: 12px;
}

.convert-foot button:disabled {
  color: #b5b5b5;
}

/* Bottom bars */
.comments {
  position: absolute;
  left: 4px;
  bottom: 0;
  width: 298px;
  height: 6px;
  border: 1px solid #c6c6c6;
  border-bottom: 0;
  background: #f1f1f1;
}

.navbar {
  position: absolute;
  left: 50%;
  bottom: 0;
  transform: translateX(-50%);
  background: #f1f1f1;
}
</style>
